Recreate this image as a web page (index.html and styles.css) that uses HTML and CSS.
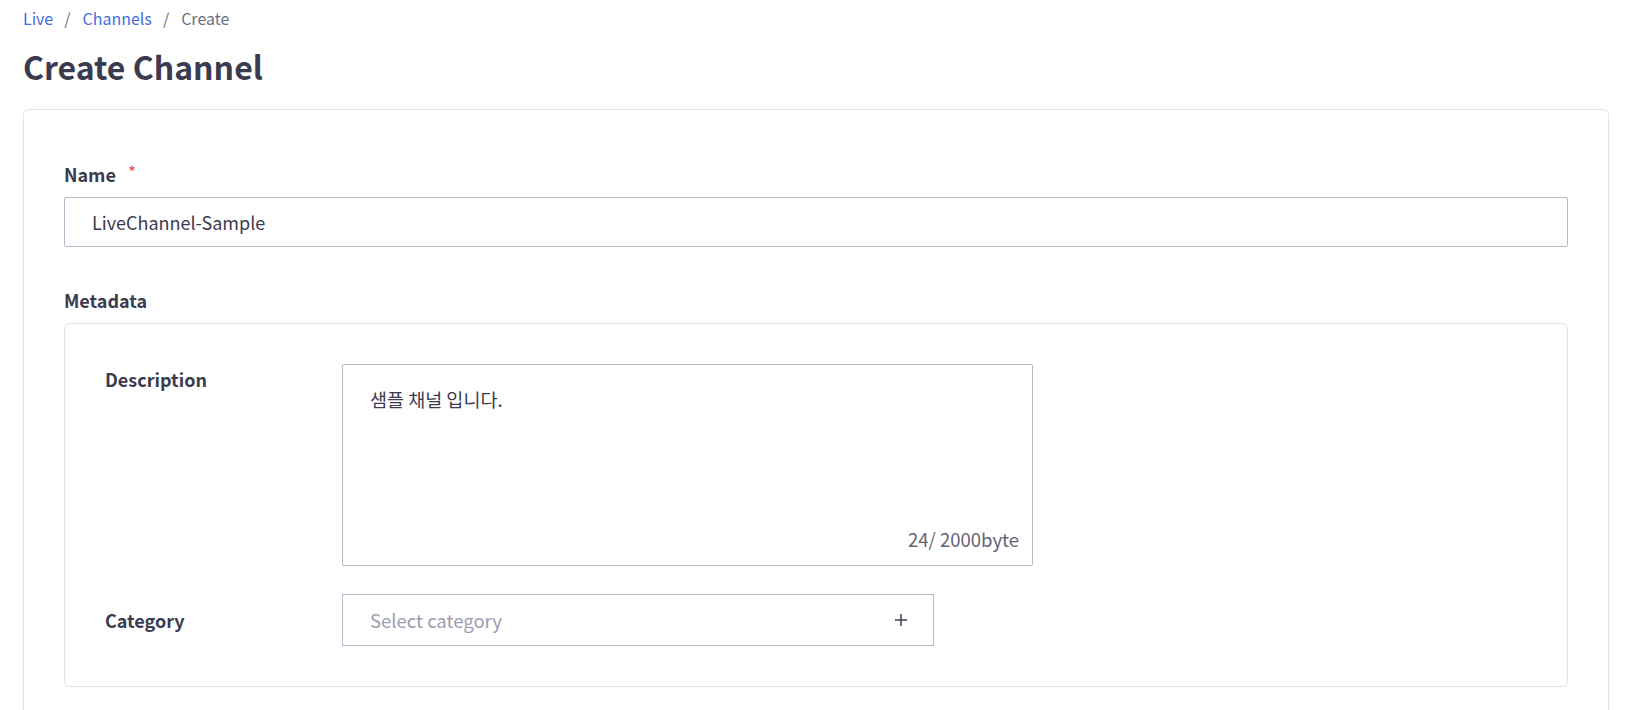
FILE: index.html
```html
<!DOCTYPE html>
<html lang="en">
<head>
<meta charset="utf-8">
<title>Create Channel</title>
<link rel="stylesheet" href="styles.css">
</head>
<body>
<div class="page">
  <nav class="breadcrumb">
    <a class="crumb-link" href="#">Live</a>
    <span class="sep">/</span>
    <a class="crumb-link" href="#">Channels</a>
    <span class="sep">/</span>
    <span class="crumb-current">Create</span>
  </nav>
  <h1 class="title">Create Channel</h1>
  <section class="card">
    <div class="field">
      <label class="label">Name <span class="req">*</span></label>
      <div class="input">LiveChannel-Sample</div>
    </div>
    <div class="field field-meta">
      <label class="label">Metadata</label>
      <div class="meta-box">
        <div class="meta-row meta-row-top">
          <div class="meta-label meta-label-top">Description</div>
          <div class="textarea">
            <div class="textarea-text">샘플 채널 입니다.</div>
            <div class="counter">24/ 2000byte</div>
          </div>
        </div>
        <div class="meta-row">
          <div class="meta-label">Category</div>
          <div class="select">
            <span class="placeholder">Select category</span>
            <svg class="plus" width="14" height="14" viewBox="0 0 14 14"><path d="M7 1v12M1 7h12" stroke="#3c3c4f" stroke-width="1.5" fill="none"/></svg>
          </div>
        </div>
      </div>
    </div>
  </section>
</div>
</body>
</html>
```

FILE: styles.css
```css
* { box-sizing: border-box; }
html, body { margin: 0; padding: 0; background: #ffffff; }
body {
  font-family: "Noto Sans CJK KR", "Noto Sans", sans-serif;
  color: #3b3b4f;
  height: 710px;
  overflow: hidden;
}
.page {
  padding: 6px 39px 0 23px;
}
.breadcrumb {
  font-size: 16px;
  line-height: 24px;
  display: flex;
  align-items: center;
}
.crumb-link {
  color: #436be0;
  text-decoration: none;
}
.sep {
  color: #6e6e80;
  margin: 0 12px 0 11px;
}
.crumb-current {
  color: #6e6e80;
}
.title {
  margin: 16px 0 23px;
  font-size: 32px;
  line-height: 40px;
  font-weight: 700;
  color: #3b3b4f;
}
.card {
  border: 1px solid #e3e1ef;
  border-radius: 6px;
  padding: 52px 40px 40px;
  min-height: 620px;
}
.field {
  display: flex;
  flex-direction: column;
}
.label {
  font-size: 18px;
  line-height: 24px;
  font-weight: 700;
  color: #3b3b4f;
  margin-bottom: 11px;
}
.req {
  color: #e8553a;
  font-weight: 400;
  font-size: 17px;
  vertical-align: top;
  line-height: 20px;
  margin-left: 8px;
}
.input {
  height: 50px;
  border: 1px solid #b9b7c9;
  border-radius: 2px;
  padding: 0 27px;
  display: flex;
  align-items: center;
  font-size: 18px;
  color: #3b3b4f;
}
.field-meta {
  margin-top: 41px;
}
.field-meta .label {
  margin-bottom: 11px;
}
.meta-box {
  border: 1px solid #e3e1ef;
  border-radius: 6px;
  padding: 40px;
  display: flex;
  flex-direction: column;
  gap: 28px;
}
.meta-row {
  display: flex;
  align-items: center;
}
.meta-row-top {
  align-items: flex-start;
}
.meta-label {
  width: 237px;
  flex: none;
  font-size: 18px;
  line-height: 24px;
  font-weight: 700;
  color: #3b3b4f;
}
.meta-label-top {
  padding-top: 3px;
}
.textarea {
  width: 691px;
  height: 202px;
  border: 1px solid #b9b7c9;
  border-radius: 2px;
  padding: 21px 13px 14px 27px;
  display: flex;
  flex-direction: column;
  justify-content: space-between;
}
.textarea-text {
  font-size: 18.5px;
  line-height: 26px;
  color: #3b3b4f;
}
.counter {
  align-self: flex-end;
  font-size: 18.5px;
  line-height: 24px;
  color: #646475;
}
.select {
  width: 592px;
  height: 52px;
  border: 1px solid #b9b7c9;
  padding: 0 25px 0 27px;
  display: flex;
  align-items: center;
  justify-content: space-between;
}
.placeholder {
  font-size: 18.5px;
  color: #9d9cb0;
}
.plus { display: block; }
```
